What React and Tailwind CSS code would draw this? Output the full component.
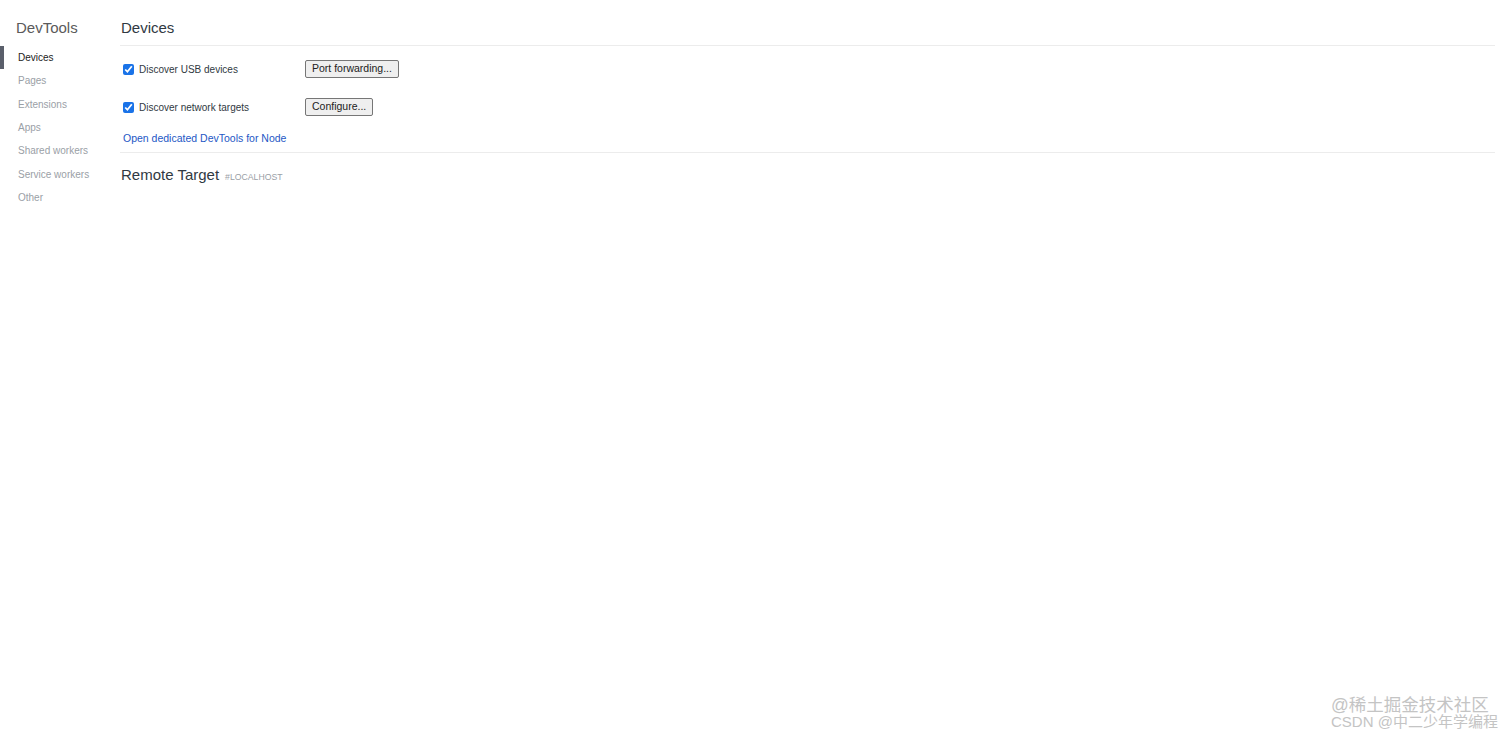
export default function App() {
  const nav = ["Devices", "Pages", "Extensions", "Apps", "Shared workers", "Service workers", "Other"];
  return (
    <div className="relative w-[1512px] h-[738px] bg-white text-[#303942] overflow-hidden font-['Liberation_Sans',Arial,sans-serif]">
      <div className="flex h-full">
        <div className="w-[120px] shrink-0 pt-[18px]">
          <div className="pl-[16px] text-[15px] leading-[20px] text-[#5a5a5a]">DevTools</div>
          <div className="mt-[8px] flex flex-col">
            {nav.map((n, i) => (
              <div key={n} className={"flex items-center h-[23.3px] text-[10px] " + (i === 0 ? "text-[#222] border-l-[4px] border-[#5a5f6b] pl-[14px]" : "text-[#9aa0a6] pl-[18px]")}>
                {n}
              </div>
            ))}
          </div>
        </div>
        <div className="flex-1 pr-[17px]">
          <div className="pt-[18px] pb-[7px] border-b border-[#ececec]">
            <div className="pl-[1px] text-[15px] leading-[20px] text-[#303942]">Devices</div>
          </div>
          <div className="pl-[3px]">
            <div className="flex items-center h-[18px] mt-[14px]">
              <label className="flex items-center w-[182px] text-[10px] text-[#303942]">
                <input type="checkbox" defaultChecked className="w-[11px] h-[11px] m-0 mr-[5px] accent-[#1a73e8]" />
                Discover USB devices
              </label>
              <button className="h-[18px] px-[6px] text-[10.5px] border border-[#767676] rounded-[2px] bg-[#efefef] text-[#222]">Port forwarding...</button>
            </div>
            <div className="flex items-center h-[18px] mt-[20px]">
              <label className="flex items-center w-[182px] text-[10px] text-[#303942]">
                <input type="checkbox" defaultChecked className="w-[11px] h-[11px] m-0 mr-[5px] accent-[#1a73e8]" />
                Discover network targets
              </label>
              <button className="h-[18px] px-[6px] text-[10.5px] border border-[#767676] rounded-[2px] bg-[#efefef] text-[#222]">Configure...</button>
            </div>
            <div className="mt-[15px] text-[10.5px] leading-[14px] text-[#2457c5]">Open dedicated DevTools for Node</div>
          </div>
          <div className="mt-[7px] border-b border-[#ececec]"></div>
          <div className="mt-[12px] pl-[1px] flex items-baseline gap-[6px]">
            <span className="text-[15px] leading-[20px] text-[#303942]">Remote Target</span>
            <span className="text-[8.7px] text-[#9aa0a6]">#LOCALHOST</span>
          </div>
        </div>
      </div>
      <div className="absolute left-[1331px] bottom-[8px] text-[#c4c4c4] font-['Liberation_Sans','Noto_Sans_CJK_SC',sans-serif]">
        <div className="text-[17.5px] leading-[17px]">@稀土掘金技术社区</div>
        <div className="text-[15px] leading-[16px]">CSDN @中二少年学编程</div>
      </div>
    </div>
  );
}
